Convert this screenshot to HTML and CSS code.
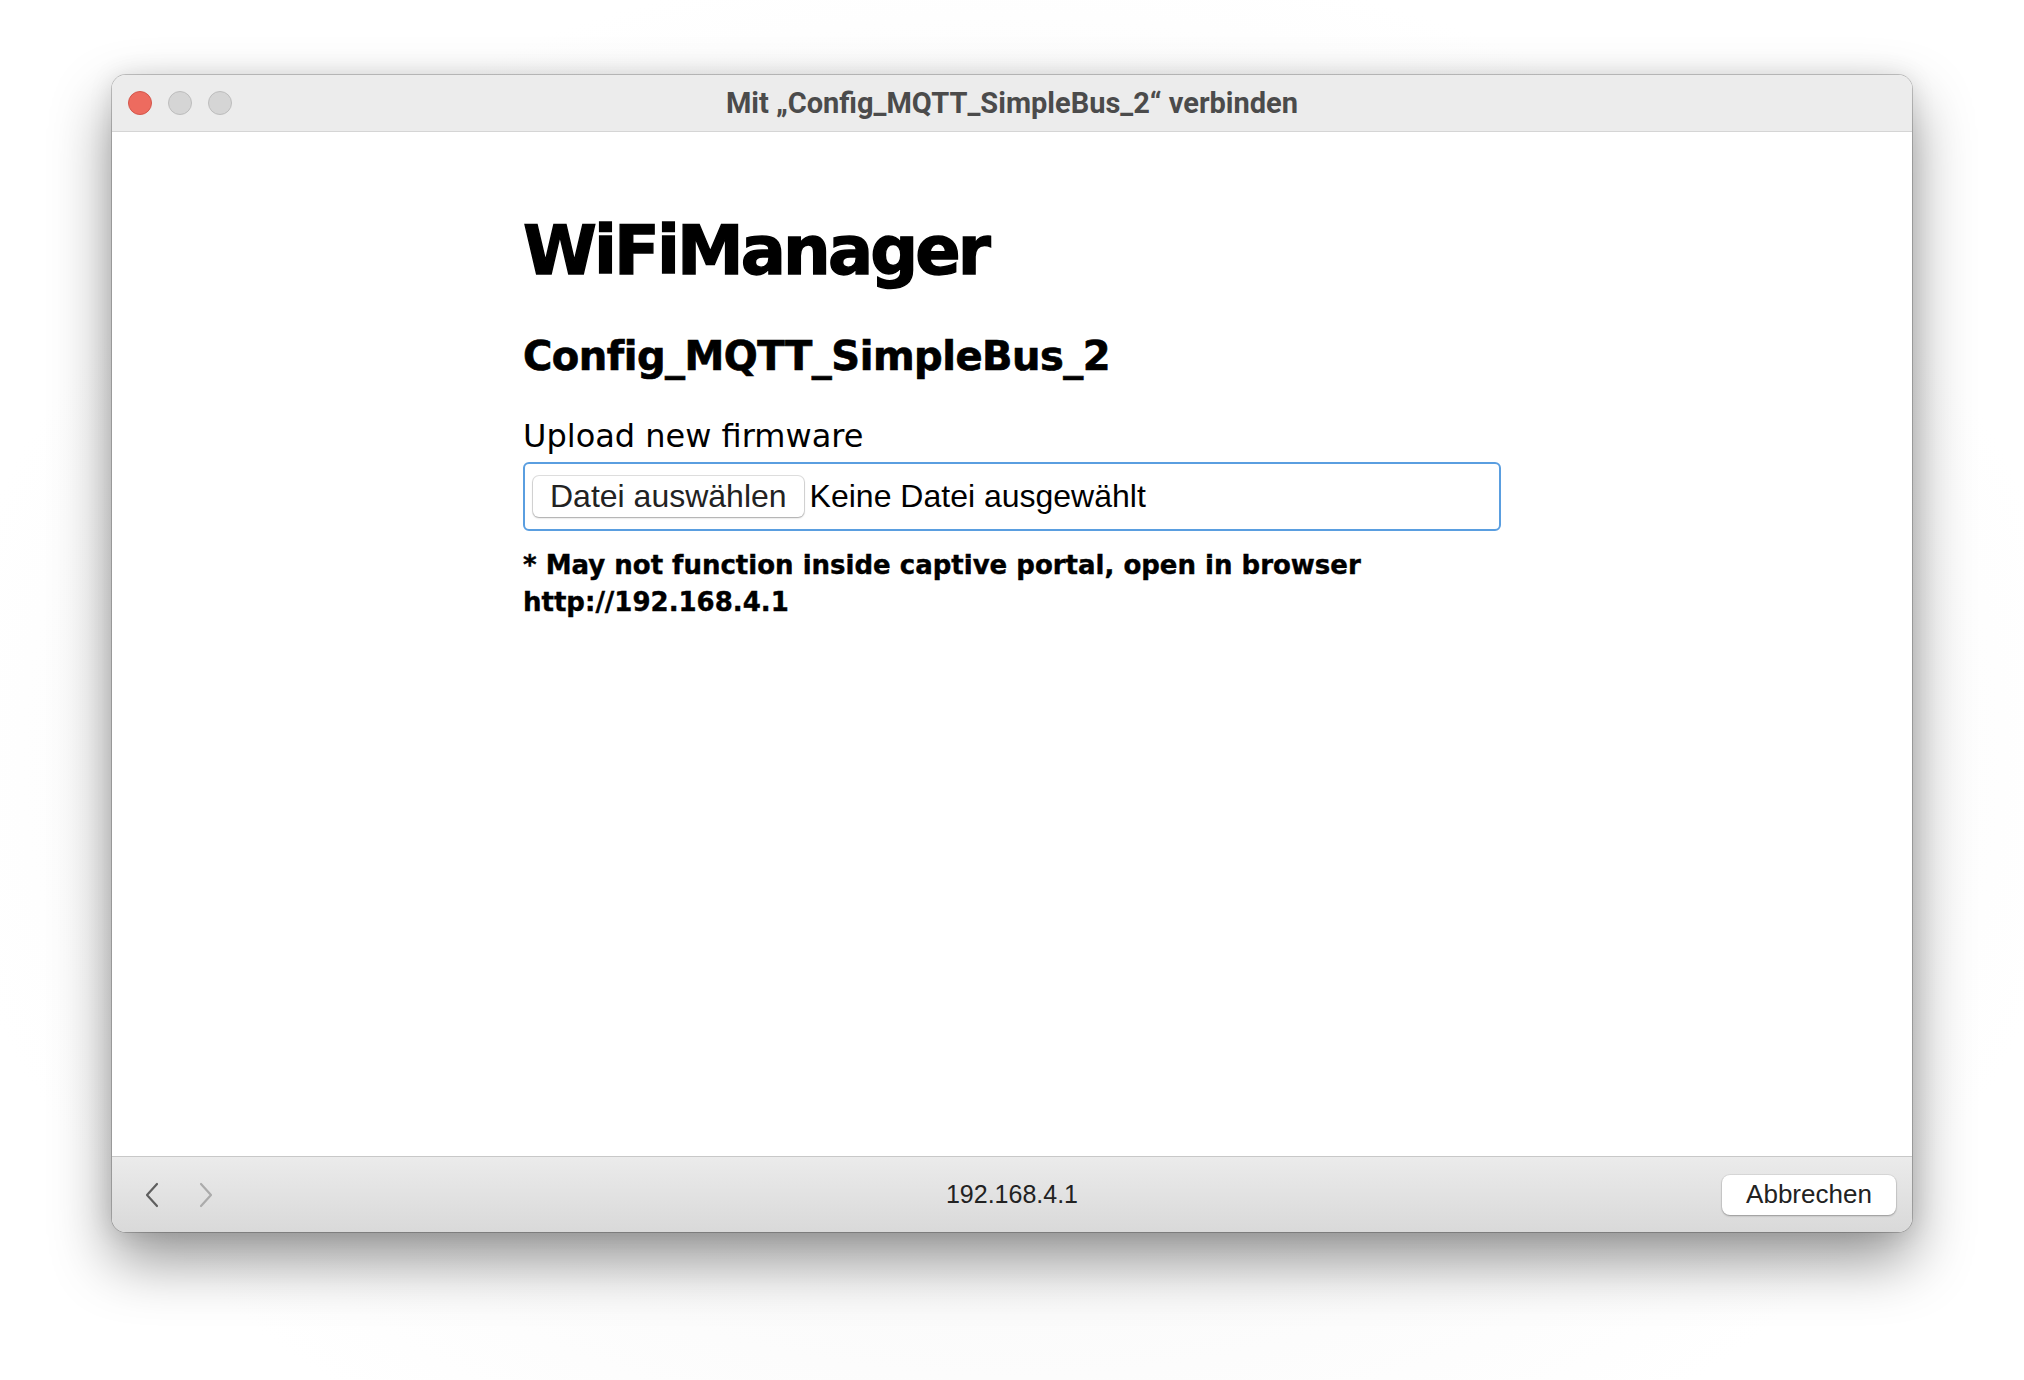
FILE: index.html
```html
<!DOCTYPE html>
<html lang="de">
<head>
<meta charset="utf-8">
<title>Mit „Config_MQTT_SimpleBus_2“ verbinden</title>
<link rel="stylesheet" href="styles.css">
</head>
<body>
<div class="stage">
  <div class="window">
    <div class="titlebar">
      <div class="lights">
        <span class="light red"></span>
        <span class="light gray"></span>
        <span class="light gray"></span>
      </div>
      <div class="title">Mit „Config_MQTT_SimpleBus_2“ verbinden</div>
      <div class="spacer"></div>
    </div>
    <div class="content">
      <div class="column">
        <h1 class="h1">WiFiManager</h1>
        <h3 class="h3">Config_MQTT_SimpleBus_2</h3>
        <div class="label">Upload new firmware</div>
        <div class="filebox">
          <span class="filebtn">Datei auswählen</span>
          <span class="filename">Keine Datei ausgewählt</span>
        </div>
        <div class="note">* May not function inside captive portal, open in browser http://192.168.4.1</div>
      </div>
    </div>
    <div class="bottombar">
      <div class="nav">
        <svg class="chev back" width="16" height="26" viewBox="0 0 16 26"><path d="M13 2 L3 13 L13 24" fill="none" stroke="#5f5f5f" stroke-width="2.2" stroke-linecap="round" stroke-linejoin="round"/></svg>
        <svg class="chev fwd" width="16" height="26" viewBox="0 0 16 26"><path d="M3 2 L13 13 L3 24" fill="none" stroke="#ababab" stroke-width="2.2" stroke-linecap="round" stroke-linejoin="round"/></svg>
      </div>
      <div class="url">192.168.4.1</div>
      <div class="actions"><span class="cancel">Abbrechen</span></div>
    </div>
  </div>
</div>
</body>
</html>
```
FILE: styles.css
```css
html, body {
  margin: 0;
  padding: 0;
  background: #ffffff;
}
.stage {
  width: 2024px;
  height: 1380px;
  box-sizing: border-box;
  padding: 75px 0 0 112px;
  background: radial-gradient(ellipse at 50% 55%, #f2f2f2 0%, #ffffff 75%);
}
.window {
  width: 1800px;
  height: 1157px;
  border-radius: 14px;
  overflow: hidden;
  display: flex;
  flex-direction: column;
  background: #fff;
  box-shadow: 0 28px 60px rgba(0,0,0,0.42), 0 0 24px rgba(0,0,0,0.10), 0 0 0 1px rgba(0,0,0,0.20);
}
.titlebar {
  height: 56px;
  flex: none;
  background: #ececec;
  border-bottom: 1px solid #d5d5d5;
  display: grid;
  grid-template-columns: 1fr auto 1fr;
  align-items: center;
}
.lights {
  display: flex;
  gap: 16px;
  padding-left: 16px;
}
.light {
  width: 22px;
  height: 22px;
  border-radius: 50%;
  display: block;
}
.light.red {
  background: #ed6b5f;
  border: 1px solid #d4564b;
}
.light.gray {
  background: #d5d5d5;
  border: 1px solid #bdbdbd;
}
.title {
  font-family: Roboto, "Liberation Sans", sans-serif;
  font-weight: 700;
  font-size: 29px;
  color: #4b4b4b;
  white-space: nowrap;
}
.content {
  flex: 1;
  background: #fff;
}
.column {
  width: 978px;
  margin: 0 auto;
  padding-top: 79px;
  font-family: "DejaVu Sans", Verdana, sans-serif;
  color: #000;
}
.h1 {
  margin: 0;
  font-size: 67px;
  line-height: 80px;
  font-weight: 700;
  letter-spacing: -2.9px;
  -webkit-text-stroke: 1.4px #000;
}
.h3 {
  margin: 41px 0 0;
  font-size: 40px;
  line-height: 48px;
  font-weight: 700;
  letter-spacing: -0.5px;
  -webkit-text-stroke: 0.7px #000;
}
.label {
  margin-top: 36px;
  font-size: 32px;
  line-height: 40px;
}
.filebox {
  margin-top: 6px;
  height: 69px;
  box-sizing: border-box;
  border: 2px solid #5a9ee0;
  border-radius: 6px;
  display: flex;
  align-items: center;
  padding-left: 8px;
  gap: 6px;
  font-family: "Liberation Sans", Arial, sans-serif;
}
.filebtn {
  height: 41px;
  box-sizing: border-box;
  padding: 0 17px;
  display: flex;
  align-items: center;
  background: #fff;
  border-radius: 6px;
  box-shadow: 0 0 0 1px rgba(0,0,0,0.12), 0 1px 2px rgba(0,0,0,0.25);
  font-size: 32px;
  color: #222;
}
.filename {
  font-size: 32px;
  color: #000;
}
.note {
  margin-top: 16px;
  width: 860px;
  font-size: 26px;
  line-height: 37px;
  font-weight: 700;
  -webkit-text-stroke: 0.4px #000;
}
.bottombar {
  height: 75px;
  flex: none;
  border-top: 1px solid #c8c8c8;
  background: linear-gradient(#ebebeb, #d9d9d9);
  display: grid;
  grid-template-columns: 1fr auto 1fr;
  align-items: center;
}
.nav {
  display: flex;
  align-items: center;
  gap: 38px;
  padding-left: 32px;
}
.chev {
  display: block;
}
.url {
  font-family: "Liberation Sans", Arial, sans-serif;
  font-size: 25px;
  color: #222;
}
.actions {
  display: flex;
  justify-content: flex-end;
  padding-right: 16px;
}
.cancel {
  height: 40px;
  width: 174px;
  box-sizing: border-box;
  display: flex;
  align-items: center;
  justify-content: center;
  background: #fff;
  border-radius: 8px;
  box-shadow: 0 0 0 1px rgba(0,0,0,0.06), 0 1px 2px rgba(0,0,0,0.28);
  font-family: "Liberation Sans", Arial, sans-serif;
  font-size: 26px;
  color: #222;
}
```
